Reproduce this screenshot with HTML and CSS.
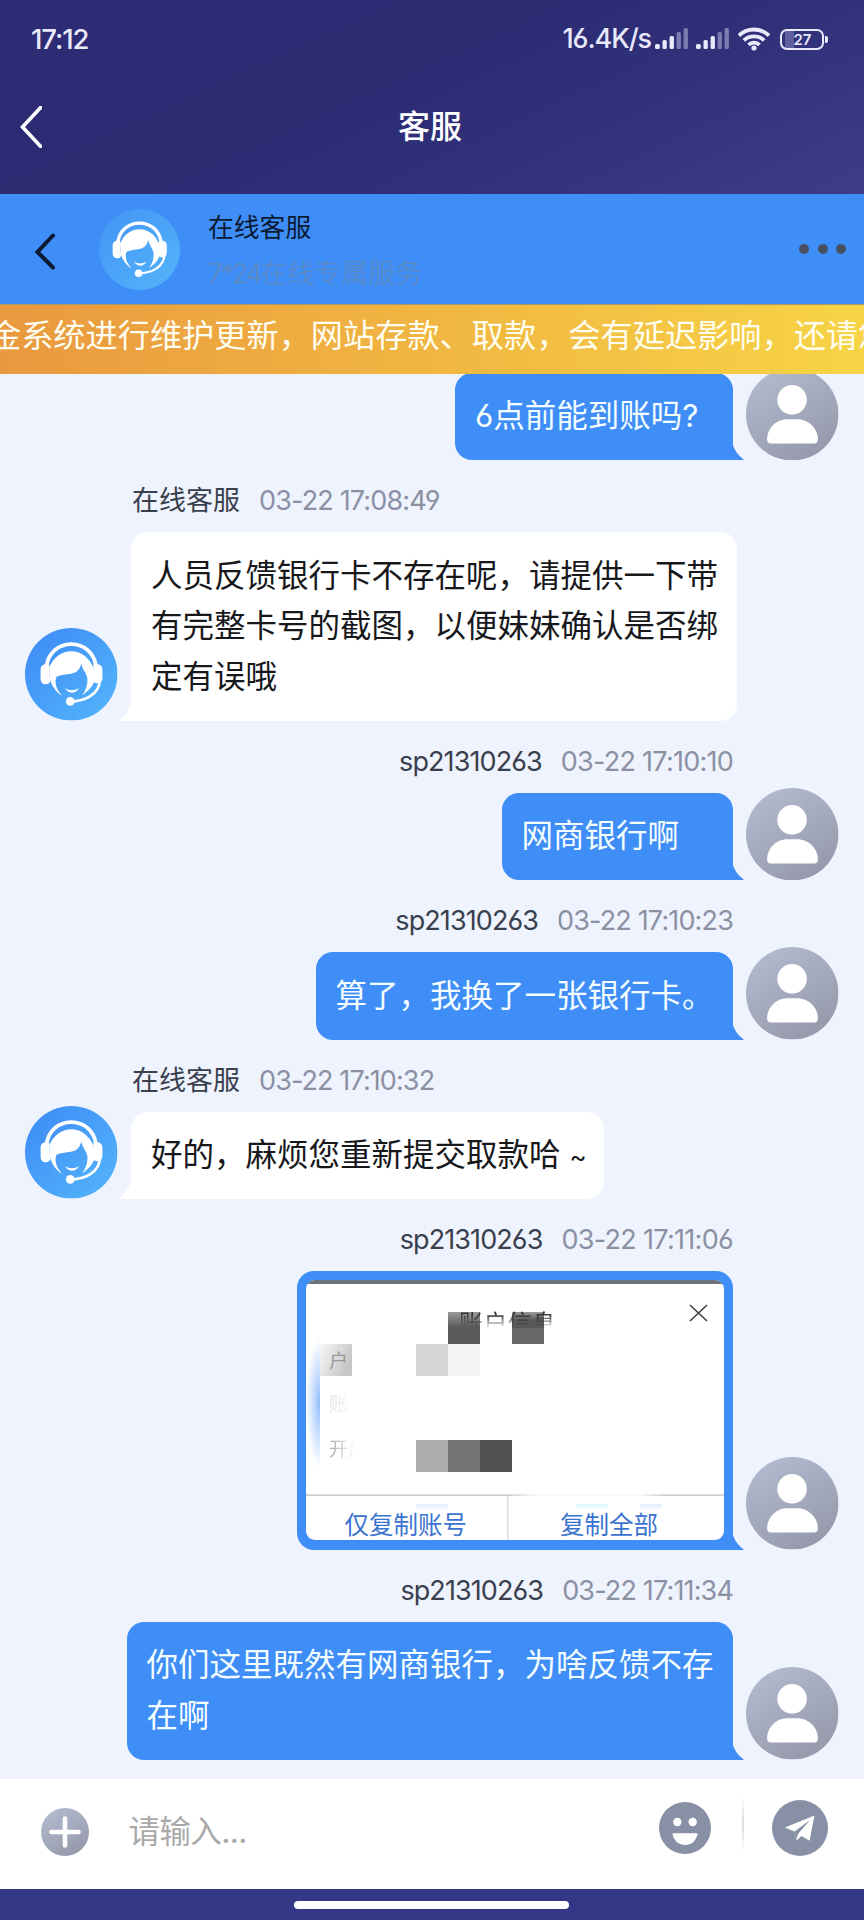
FILE: index.html
```
<!DOCTYPE html>
<html lang="zh-CN">
<head>
<meta charset="utf-8">
<title>客服</title>
<link rel="stylesheet" href="styles.css">
</head>
<body>
<svg class="defs" width="0" height="0" aria-hidden="true">
  <defs>
    <linearGradient id="gAgent" x1="0" y1="0" x2="1" y2="1"><stop offset="0.1" stop-color="#3f8ef6"/><stop offset="0.95" stop-color="#53b4fb"/></linearGradient>
    <linearGradient id="gAgentLight" x1="0" y1="0" x2="1" y2="1"><stop offset="0.1" stop-color="#4597f5"/><stop offset="0.95" stop-color="#53b4fb"/></linearGradient>
    <linearGradient id="gUser" x1="0.2" y1="0" x2="0.8" y2="1"><stop offset="0" stop-color="#b3bbcf"/><stop offset="1" stop-color="#9497a9"/></linearGradient>
    <symbol id="face" viewBox="0 0 92 92">
      <path d="M21.5 37C23.500 25 33 16 46 16S68.500 25 70.500 37" fill="none" stroke="#fff" stroke-width="3.800"/>
      <path d="M24 36h-3c-4 0-5.500 2.500-5.500 5.500v9c0 3.500 2 5.500 5.500 5.500 2 0 4-1.500 4-3zM68 36h3.500c4 0 5.500 2.500 5.500 5.500v8c0 3.500-2 5.500-5.500 5.500-2 0-3.500-1.500-3.500-3z" fill="#fff"/>
      <path d="M24 39C29 28 37 23 46 23S63 28 68 39L69.500 51C68 58 62.500 63 57 67 61 61 62.500 56 62 50 61.500 45 57 42 56 35 55 39.500 53 43 49 44.500 43 46.500 35 46 31 49 29 56 32 62 37 67.500 31 64 27 58 25 52Z" fill="#fff"/>
      <path d="M39.500 60Q46.500 64 54 60 47 69 39.500 60Z" fill="#fff"/>
      <path d="M45 73C60 73 73.500 66 74.500 52" fill="none" stroke="#fff" stroke-width="2.600"/>
      <circle cx="45" cy="73" r="4.300" fill="#fff"/>
    </symbol>
    <symbol id="agent" viewBox="0 0 92 92">
      <circle cx="46" cy="46" r="46" fill="url(#gAgent)"/>
      <use href="#face"/>
    </symbol>
    <symbol id="user" viewBox="0 0 92 92">
      <circle cx="46" cy="46" r="46" fill="url(#gUser)"/>
      <circle cx="45.800" cy="31.700" r="14.700" fill="#fff"/>
      <path d="M21 71C21 60 30 51 41 51H51C62 51 71.500 60 71.500 71Q71.500 75 67.500 75H25Q21 75 21 71Z" fill="#fff"/>
    </symbol>
    <symbol id="signal" viewBox="0 0 34 22">
      <rect x="0" y="16" width="4.800" height="5" rx="1.500" fill="#e9e9fb"/>
      <rect x="7.500" y="12" width="4.300" height="9" rx="1.500" fill="#e9e9fb"/>
      <rect x="14.600" y="8" width="4.300" height="13" rx="1.500" fill="#e9e9fb"/>
      <rect x="21.600" y="4" width="4.300" height="17" rx="1.500" fill="#7d7cb2"/>
      <rect x="28.600" y="0" width="4.300" height="21" rx="1.500" fill="#7d7cb2"/>
    </symbol>
  </defs>
</svg>

<div class="screen">
  <header class="top">
    <div class="status">
      <span class="clock">17:12</span>
      <div class="status-right">
        <span class="speed">16.4K/s</span>
        <svg class="sig" width="34" height="22"><use href="#signal"/></svg>
        <svg class="sig second" width="34" height="22"><use href="#signal"/></svg>
        <svg class="wifi" width="32" height="24" viewBox="0 0 32 24" fill="none" stroke="#e9e9fb" stroke-width="3.800">
          <path d="M1 8.500C9.500 0.500 22.500 0.500 31 8.500M5.800 13.300C11.500 8 20.500 8 26.200 13.300M10.500 17.800C13.500 15 18.500 15 21.500 17.800"/>
          <circle cx="16" cy="21" r="2.600" fill="#e9e9fb" stroke="none"/>
        </svg>
        <div class="battery"><span>27</span></div>
      </div>
    </div>
    <div class="titlebar">
      <svg class="back" width="22" height="42" viewBox="0 0 22 42"><path d="M23 -1L2.500 21 23 43" fill="none" stroke="#fff" stroke-width="3.600"/></svg>
      <h1>客服</h1>
    </div>
  </header>

  <div class="agentbar">
    <svg class="agent-back" width="22" height="38" viewBox="0 0 22 38"><path d="M19 3.500L3.500 20 19 35.500" fill="none" stroke="#0c1a33" stroke-width="4" stroke-linecap="round"/></svg>
    <svg class="agent-photo" width="81" height="81" viewBox="0 0 92 92"><circle cx="46" cy="46" r="46" fill="url(#gAgentLight)"/><use href="#face"/></svg>
    <div class="agent-info">
      <div class="agent-name">在线客服</div>
      <div class="agent-sub"><span>7*24</span>在线专属服务</div>
    </div>
    <div class="dots"><i></i><i></i><i></i></div>
  </div>

  <div class="marquee"><span>金系统进行维护更新，网站存款、取款，会有延迟影响，还请您</span></div>

  <main class="chat">
    <div class="row me">
      <div class="bubble w-ask">6点前能到账吗?<svg class="tail" viewBox="0 0 12 18"><path d="M0 0C2 8 6 13 12 18H0Z"/></svg></div>
      <svg class="avatar"><use href="#user"/></svg>
    </div>

    <div class="meta"><span class="who">在线客服</span><span class="time t1">03-22 17:08:49</span></div>
    <div class="row">
      <svg class="avatar"><use href="#agent"/></svg>
      <div class="bubble w-full">人员反馈银行卡不存在呢，请提供一下带<br>有完整卡号的截图，以便妹妹确认是否绑<br>定有误哦<svg class="tail" viewBox="0 0 14 24"><path d="M14 0C13 10 8 19 0 24H14Z"/></svg></div>
    </div>

    <div class="meta me"><span class="id">sp21310263</span><span class="time t2">03-22 17:10:10</span></div>
    <div class="row me">
      <div class="bubble w-bank">网商银行啊<svg class="tail" viewBox="0 0 12 18"><path d="M0 0C2 8 6 13 12 18H0Z"/></svg></div>
      <svg class="avatar"><use href="#user"/></svg>
    </div>

    <div class="meta me"><span class="id">sp21310263</span><span class="time t3">03-22 17:10:23</span></div>
    <div class="row me">
      <div class="bubble w-card">算了，我换了一张银行卡。<svg class="tail" viewBox="0 0 12 18"><path d="M0 0C2 8 6 13 12 18H0Z"/></svg></div>
      <svg class="avatar"><use href="#user"/></svg>
    </div>

    <div class="meta"><span class="who">在线客服</span><span class="time t4">03-22 17:10:32</span></div>
    <div class="row">
      <svg class="avatar"><use href="#agent"/></svg>
      <div class="bubble w-ok">好的，麻烦您重新提交取款哈 <span class="tilde">~</span><svg class="tail" viewBox="0 0 14 24"><path d="M14 0C13 10 8 19 0 24H14Z"/></svg></div>
    </div>

    <div class="meta me"><span class="id">sp21310263</span><span class="time t5">03-22 17:11:06</span></div>
    <div class="row me">
      <div class="bubble photo">
        <svg class="shot" viewBox="0 0 418 260" width="418" height="260">
          <defs>
            <linearGradient id="fadeDown" x1="0" y1="0" x2="0" y2="1"><stop offset="0.250" stop-color="#fff"/><stop offset="0.700" stop-color="#000"/></linearGradient>
            <mask id="mTitle"><rect x="140" y="26" width="130" height="32" fill="url(#fadeDown)"/></mask>
            <linearGradient id="fadeRight"><stop offset="0.100" stop-color="#fff"/><stop offset="0.950" stop-color="#000"/></linearGradient>
            <mask id="mLabel"><rect x="20" y="100" width="31" height="100" fill="url(#fadeRight)"/></mask>
            <linearGradient id="gTile" x1="0" y1="0" x2="0" y2="1"><stop offset="0" stop-color="#9a9a9a"/><stop offset="0.500" stop-color="#595959"/></linearGradient>
            <linearGradient id="gLeft" x1="0" y1="0" x2="1" y2="0.400"><stop offset="0" stop-color="#f7f7f7"/><stop offset="1" stop-color="#c6c6c6"/></linearGradient>
            <radialGradient id="gGlow" cx="1" cy="0.500" r="1" fx="1" fy="0.500" gradientTransform="translate(0 0.250) scale(1 0.500)"><stop offset="0" stop-color="#8dbcfb"/><stop offset="0.300" stop-color="#b4d3fd"/><stop offset="1" stop-color="#fff"/></radialGradient>
            <linearGradient id="gRule"><stop offset="0" stop-color="#b8b8b8"/><stop offset="0.480" stop-color="#b8b8b8"/><stop offset="0.550" stop-color="#f4f4f4"/><stop offset="0.800" stop-color="#f4f4f4"/><stop offset="0.860" stop-color="#b8b8b8"/></linearGradient>
            <linearGradient id="gTint" x1="0" y1="0" x2="0" y2="1"><stop offset="0" stop-color="#e0edfd"/><stop offset="1" stop-color="#fff"/></linearGradient>
            <linearGradient id="gCyan" x1="0" y1="0" x2="0" y2="1"><stop offset="0" stop-color="#dcf7fc"/><stop offset="1" stop-color="#fff"/></linearGradient>
          </defs>
          <rect width="418" height="260" fill="#fff"/>
          <rect width="418" height="4" fill="#6c727d"/>
          <rect x="0" y="58" width="14" height="130" fill="url(#gGlow)"/>
          <rect x="142" y="32" width="32" height="32" fill="url(#gTile)"/>
          <rect x="206" y="32" width="32" height="32" fill="#686868"/>
          <rect x="206" y="32" width="32" height="16" fill="url(#gTile)"/>
          <rect x="110" y="64" width="32" height="32" fill="#d5d5d5"/>
          <rect x="142" y="64" width="32" height="32" fill="#f4f4f4"/>
          <rect x="14" y="64" width="32" height="32" fill="url(#gLeft)"/>
          <rect x="110" y="160" width="32" height="32" fill="#adadad"/>
          <rect x="142" y="160" width="32" height="32" fill="#747474"/>
          <rect x="174" y="160" width="32" height="32" fill="#515151"/>
          <g mask="url(#mTitle)"><text x="153" y="52" font-size="24" textLength="97" fill="#333">账户信息</text></g>
          <text x="23" y="88" font-size="19" fill="#999">户</text>
          <g mask="url(#mLabel)"><text x="23" y="131" font-size="19" fill="#e2e2e2">账</text><text x="23" y="176" font-size="19" fill="#aaa">开户</text></g>
          <path d="M384 25L401 41M401 25L384 41" stroke="#3c3c3c" stroke-width="1.500"/>
          <rect x="0" y="214.500" width="418" height="1.200" fill="url(#gRule)"/>
          <rect x="201" y="216" width="1.600" height="44" fill="#dedede"/>
          <rect x="110" y="224" width="32" height="7" fill="url(#gTint)"/>
          <rect x="270" y="224" width="32" height="7" fill="url(#gCyan)"/>
          <rect x="334" y="224" width="22" height="7" fill="url(#gTint)"/>
          <text x="38.500" y="254" font-size="24.500" fill="#3b73d1">仅复制账号</text>
          <text x="254" y="254" font-size="24.500" fill="#3b73d1">复制全部</text>
        </svg>
        <svg class="tail" viewBox="0 0 12 18"><path d="M0 0C2 8 6 13 12 18H0Z"/></svg>
      </div>
      <svg class="avatar"><use href="#user"/></svg>
    </div>

    <div class="meta me"><span class="id">sp21310263</span><span class="time t6">03-22 17:11:34</span></div>
    <div class="row me">
      <div class="bubble w-full">你们这里既然有网商银行，为啥反馈不存<br>在啊<svg class="tail" viewBox="0 0 12 18"><path d="M0 0C2 8 6 13 12 18H0Z"/></svg></div>
      <svg class="avatar"><use href="#user"/></svg>
    </div>
  </main>

  <footer class="composer">
    <svg class="plus" width="48" height="48" viewBox="0 0 48 48"><circle cx="24" cy="24" r="24" fill="url(#gUser)"/><path d="M24 10.500v27M10.500 24h27" stroke="#fff" stroke-width="4.600" stroke-linecap="round"/></svg>
    <span class="placeholder">请输入...</span>
    <svg class="smile" width="52" height="52" viewBox="0 0 52 52"><circle cx="26" cy="26" r="26" fill="#8890a6"/><circle cx="18.300" cy="20" r="4.200" fill="#fff"/><circle cx="33.700" cy="20" r="4.200" fill="#fff"/><path d="M14.500 31.200H37.500Q38.800 31.200 38.500 32.500C36.500 39.500 32 43 26 43S15.500 39.500 13.500 32.500Q13.200 31.200 14.500 31.200Z" fill="#fff"/></svg>
    <i class="rule"></i>
    <svg class="send" width="56" height="56" viewBox="0 0 56 56"><circle cx="28" cy="28" r="28" fill="#8890a6"/><path d="M42.500 15.500L37.500 40.800 29.500 36 24.500 40.500 22.500 31.500 13 27.500Z" fill="#fff"/><path d="M38 20L22.500 31.500 24.300 39.500 26 34Z" fill="#8890a6"/></svg>
  </footer>

  <div class="navbar"><i></i></div>
</div>
</body>
</html>
```
FILE: styles.css
```
* { box-sizing: border-box; }
body {
  margin: 0;
  font-family: Inter, "Noto Sans CJK SC", sans-serif;
  font-feature-settings: "cv03", "cv04";
}
.defs { position: absolute; }
.screen { width: 864px; height: 1920px; display: flex; flex-direction: column; overflow: hidden; background: #eef3fe; }

.top {
  height: 194px;
  flex: none;
  background: linear-gradient(155deg, #2d2c75 0%, #2b2b72 40%, #2f3078 62%, #3d3c89 100%);
  color: #fff;
}
.status { height: 78px; padding: 0 36px 0 31px; display: flex; align-items: center; justify-content: space-between; color: #e9e9fb; }
.clock { font-size: 27.500px; font-weight: 500; letter-spacing: -1.100px; line-height: 30px; }
.status-right { display: flex; align-items: center; }
.speed { font-size: 27px; font-weight: 500; letter-spacing: -1.100px; margin-right: 4px; line-height: 30px; }
.second { margin-left: 7px; }
.wifi { margin: 0 10px 0 8px; }
.battery { position: relative; width: 44px; height: 21px; border: 2px solid #e9e9fb; border-radius: 7px; margin-right: 4px; font-size: 15px; font-weight: 600; line-height: 17px; text-align: center; background: linear-gradient(90deg, transparent 3px, #605f9c 3px, #605f9c 12px, transparent 12px); }
.battery span { padding-left: 1px; }
.battery::after { content: ""; position: absolute; right: -6px; top: 5px; width: 3px; height: 7px; border-radius: 0 2px 2px 0; background: #e9e9fb; }
.titlebar { height: 97px; display: grid; grid-template-columns: 42px 1fr 42px; align-items: center; }
.back { margin-left: 20px; }
.titlebar h1 { margin: 0; padding-right: 4px; text-align: center; font-size: 32px; font-weight: 500; line-height: 46px; }

.agentbar { height: 110px; flex: none; background: #3f8df6; display: flex; align-items: center; padding-left: 34px; padding-right: 18px; }
.agent-back { margin-top: 3px; }
.agent-photo { margin-left: 43px; }
.agent-info { margin-left: 28px; flex: 1; padding-top: 4px; }
.agent-name { font-size: 25.800px; line-height: 46px; color: #0c1a33; }
.agent-sub { font-size: 27px; line-height: 46px; font-weight: 300; color: #5f8bc0; }
.agent-sub span { letter-spacing: -2.400px; }
.dots { display: flex; gap: 8.500px; }
.dots i { width: 10px; height: 10px; border-radius: 50%; background: #494f63; }

.marquee { height: 70px; flex: none; overflow: hidden; white-space: nowrap; background: linear-gradient(90deg, #e9993f, #efb041 40%, #f7d446); color: #fffdf0; font-size: 32.200px; line-height: 62px; border-top: 1px solid #a89a68; }
.marquee span { margin-left: -11px; }

.chat { height: 1405px; flex: none; overflow: hidden; }
.chat > .row:first-child { margin-top: -1.200px; }
.row { display: flex; align-items: flex-end; gap: 13.500px; padding: 0 25.500px 0 25px; }
.row.me { justify-content: flex-end; }
.avatar { width: 92.500px; height: 92.500px; flex: none; margin-top: -20px; }
.bubble { position: relative; background: #fff; color: #17181b; border-radius: 17px; border-bottom-left-radius: 0; padding: 18.400px 0 18.400px 20px; font-size: 31.500px; line-height: 50.600px; white-space: nowrap; }
.me .bubble { background: #3f8df6; color: #f4fdff; border-radius: 17px; border-bottom-right-radius: 0; }
.tail { position: absolute; left: -13px; bottom: 0; width: 14px; height: 24px; fill: #fff; }
.me .tail { left: auto; right: -11.500px; width: 12px; height: 18px; fill: #3f8df6; }
.w-ask { width: 277.500px; }
.w-full { width: 606px; }
.w-bank { width: 231px; }
.w-card { width: 417px; }
.w-ok { width: 473px; }
.tilde { font-size: 26px; line-height: 1; }
.photo { width: 436px; height: 279px; padding: 9px; }
.shot { display: block; border-radius: 9px; }

.meta { height: 72px; padding: 9px 131px 0 132px; display: flex; gap: 19px; font-size: 27px; line-height: 64px; white-space: nowrap; color: #3a3f4d; }
.meta.me { justify-content: flex-end; }
.id { letter-spacing: -0.900px; }
.time { color: #8b91a3; }
.t1 { letter-spacing: -0.850px; }
.t2 { letter-spacing: -0.750px; }
.t3 { letter-spacing: -0.850px; }
.t4 { letter-spacing: -0.900px; }
.t5 { letter-spacing: -0.700px; }
.t6 { letter-spacing: -0.850px; }

.composer { height: 110px; flex: none; background: #fff; display: flex; align-items: center; padding: 0 36px 0 40.500px; }
.plus { position: relative; top: -2px; }
.placeholder { flex: 1; margin-left: 40px; padding-bottom: 4px; font-size: 31.500px; line-height: 46px; color: #a9a9a9; letter-spacing: -0.600px; }
.smile, .send { margin-bottom: 12px; }
.rule { width: 2px; height: 56px; margin: 0 28px 20px 31px; background: linear-gradient(#fff, #dcdcdc 50%, #fff); }

.navbar { height: 31px; flex: none; background: #343786; display: flex; justify-content: center; padding: 12px 1px 0 0; }
.navbar i { width: 275px; height: 8px; border-radius: 4px; background: #fff; }
```
